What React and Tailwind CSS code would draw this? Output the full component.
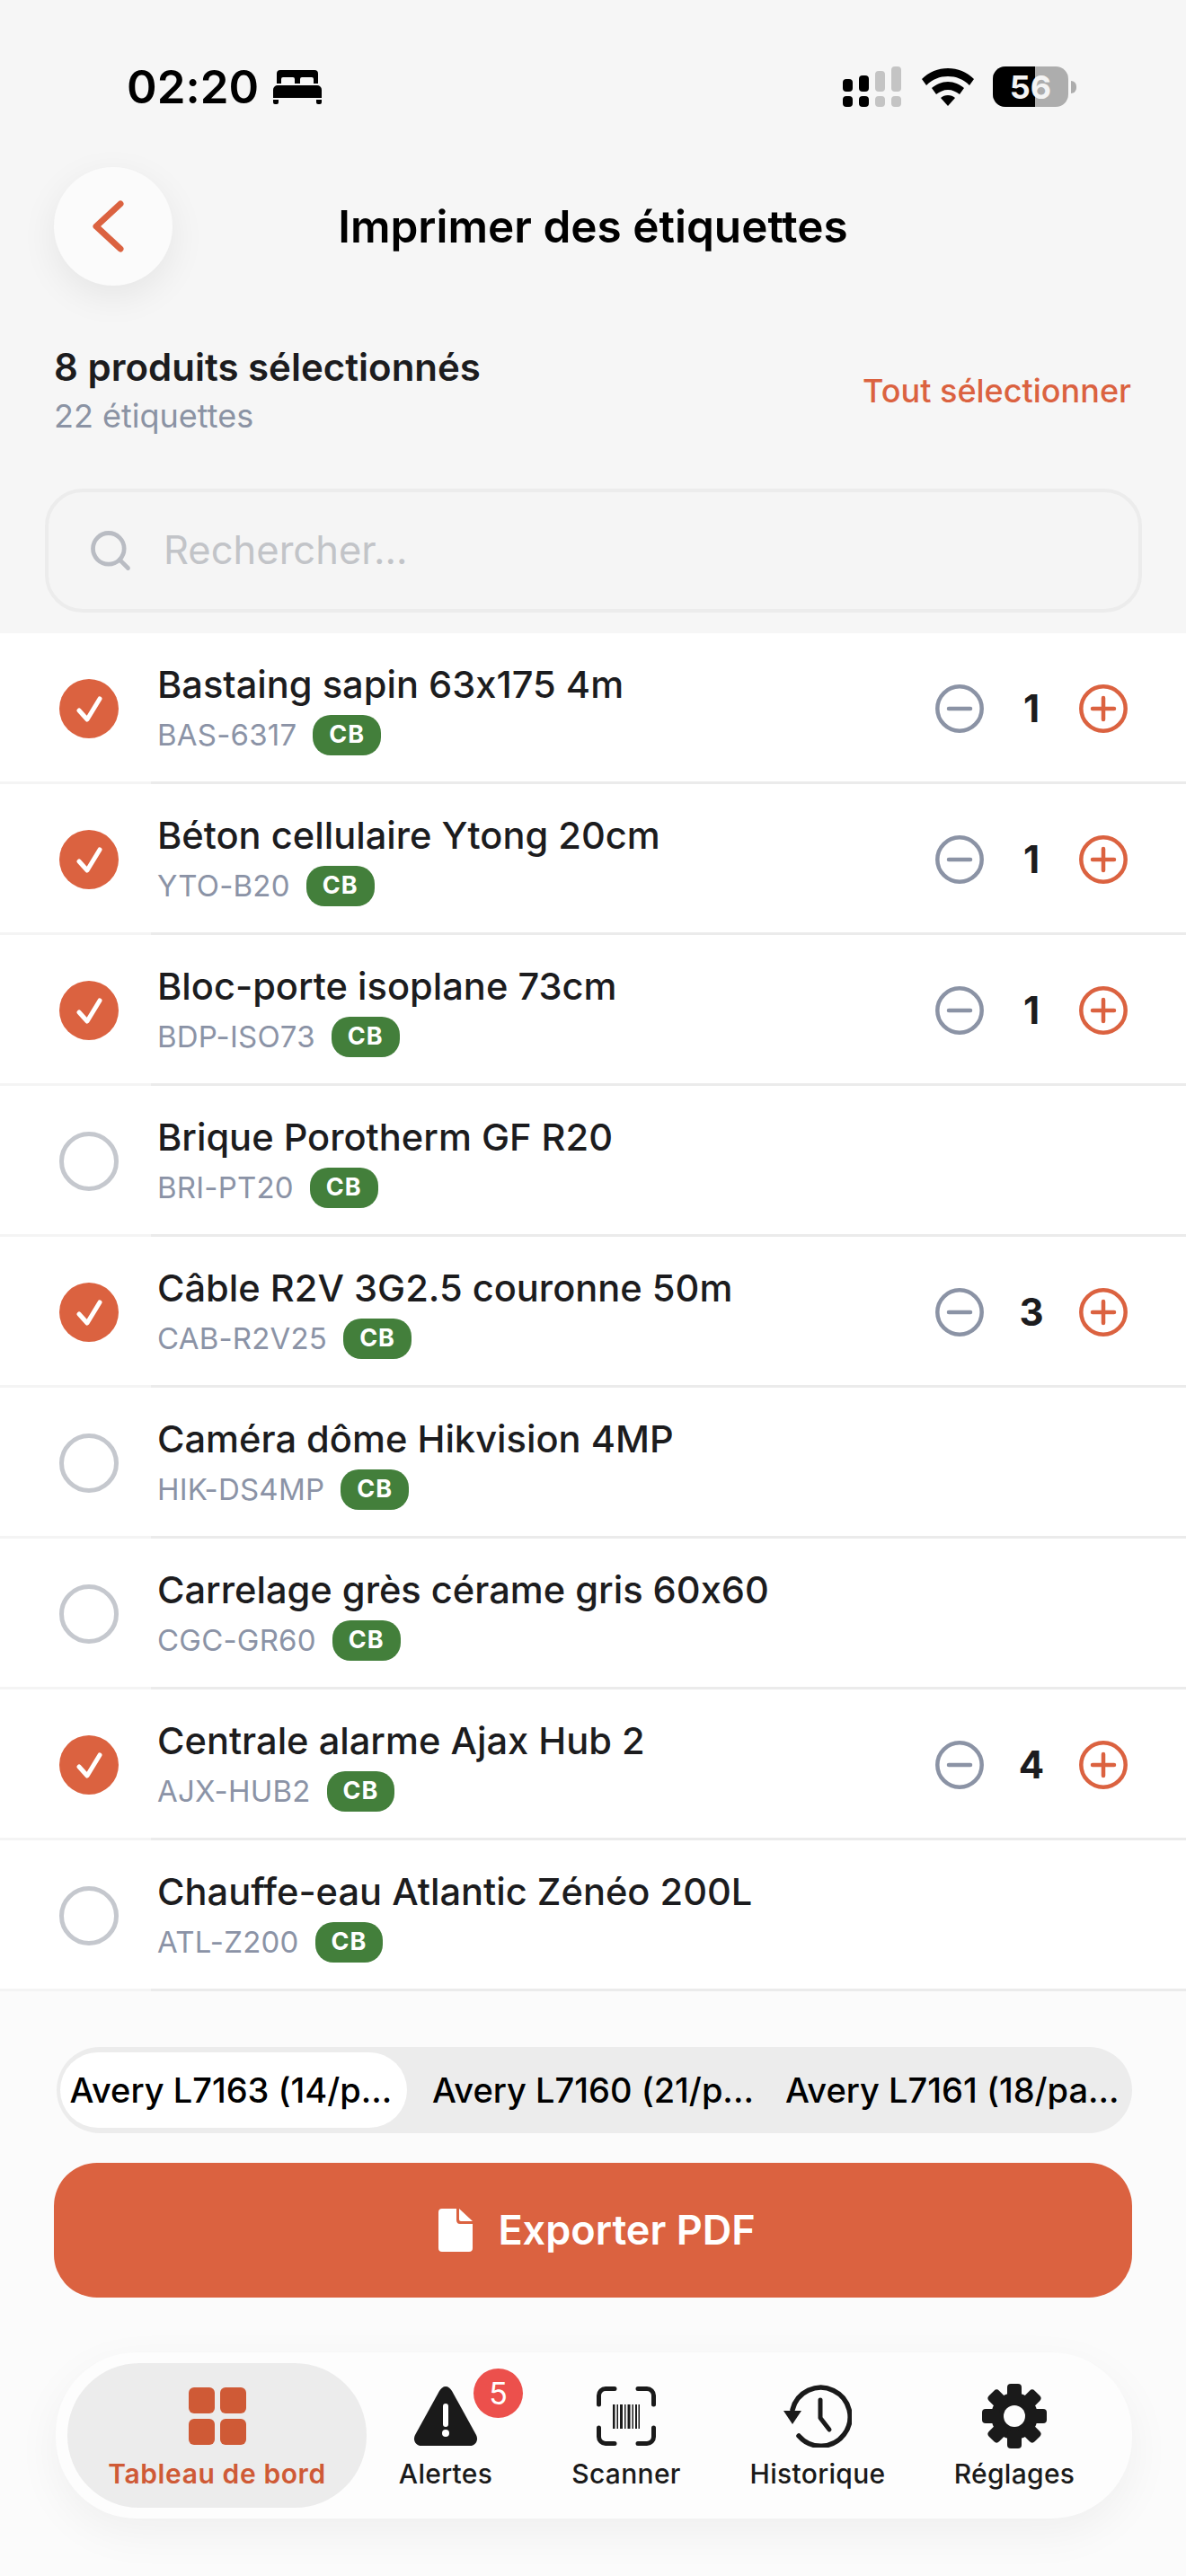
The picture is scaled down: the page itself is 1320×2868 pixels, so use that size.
import React from 'react';
import { Search } from 'lucide-react';

const products = [
  { name: 'Bastaing sapin 63x175 4m', sku: 'BAS-6317', qty: 1 },
  { name: 'Béton cellulaire Ytong 20cm', sku: 'YTO-B20', qty: 1 },
  { name: 'Bloc-porte isoplane 73cm', sku: 'BDP-ISO73', qty: 1 },
  { name: 'Brique Porotherm GF R20', sku: 'BRI-PT20' },
  { name: 'Câble R2V 3G2.5 couronne 50m', sku: 'CAB-R2V25', qty: 3 },
  { name: 'Caméra dôme Hikvision 4MP', sku: 'HIK-DS4MP' },
  { name: 'Carrelage grès cérame gris 60x60', sku: 'CGC-GR60' },
  { name: 'Centrale alarme Ajax Hub 2', sku: 'AJX-HUB2', qty: 4 },
  { name: 'Chauffe-eau Atlantic Zénéo 200L', sku: 'ATL-Z200' },
];

const Bed = () => (
  <svg width="54" height="38" viewBox="0 0 54 38" fill="#000">
    <path fillRule="evenodd" d="M8 0h38a4 4 0 0 1 4 4v11h-5v-5a2 2 0 0 0-2-2H32a2 2 0 0 0-2 2v5h-6v-5a2 2 0 0 0-2-2H11a2 2 0 0 0-2 2v5H4V4a4 4 0 0 1 4-4z" />
    <path d="M5 17h44a5 5 0 0 1 5 5v9H0v-9a5 5 0 0 1 5-5zM0 33h6v3a2 2 0 0 1-2 2H2a2 2 0 0 1-2-2zM48 33h6v3a2 2 0 0 1-2 2h-2a2 2 0 0 1-2-2z" />
  </svg>
);

const Signal = () => (
  <svg width="65" height="45" viewBox="0 0 65 45">
    <g fill="#000">
      <rect x="0" y="14" width="11" height="14" rx="4" />
      <rect x="18" y="10" width="11" height="18" rx="4" />
      <rect x="0" y="33" width="11" height="12" rx="4" />
      <rect x="18" y="33" width="11" height="12" rx="4" />
    </g>
    <g fill="#c4c4c4">
      <rect x="36" y="5" width="11" height="23" rx="4" />
      <rect x="54" y="0" width="11" height="28" rx="4" />
      <rect x="36" y="33" width="11" height="12" rx="4" />
      <rect x="54" y="33" width="11" height="12" rx="4" />
    </g>
  </svg>
);

const Wifi = () => (
  <svg width="58" height="42" viewBox="0 0 58 42" fill="#000">
    <path d="M29 0c11 0 21 4 29 12l-5 7C46 12 38 9 29 9S12 12 5 19l-5-7C8 4 18 0 29 0z" />
    <path d="M29 15c7 0 13 3 18 7l-5 7c-4-3-8-5-13-5s-9 2-13 5l-5-7c5-4 11-7 18-7z" />
    <path d="M29 30c3 0 6 1 8 3l-8 9-8-9c2-2 5-3 8-3z" />
  </svg>
);

const Battery = () => (
  <div className="flex items-center gap-[3px]">
    <div className="relative w-[84px] h-[45px] rounded-[14px] overflow-hidden bg-[#adadad] flex items-center justify-center">
      <div className="absolute left-0 top-0 bottom-0 w-[47px] bg-black" />
      <span className="relative text-[36px] font-bold text-[#f4f4f4] leading-none">56</span>
    </div>
    <div className="w-[6px] h-[14px] rounded-r-full bg-[#adadad]" />
  </div>
);

const Check = ({ on }) =>
  on ? (
    <div className="w-[66px] h-[66px] rounded-full bg-[#db6240] flex items-center justify-center shrink-0">
      <svg width="30" height="30" viewBox="0 0 30 30" fill="none" stroke="#fff" strokeWidth="5" strokeLinecap="round" strokeLinejoin="round">
        <path d="M4 17l9 10L27 4" />
      </svg>
    </div>
  ) : (
    <div className="w-[66px] h-[66px] rounded-full border-[5px] border-[#c5c8ce] shrink-0" />
  );

const Stepper = ({ qty }) => (
  <div className="flex items-center">
    <svg width="54" height="54" viewBox="0 0 54 54" fill="none" stroke="#8b93a5" strokeWidth="4.5" strokeLinecap="round">
      <circle cx="27" cy="27" r="24.7" />
      <path d="M15 27h24" />
    </svg>
    <div className="w-[106px] text-center text-[42px] font-bold text-[#1c1c1e] leading-none">{qty}</div>
    <svg width="54" height="54" viewBox="0 0 54 54" fill="none" stroke="#db6240" strokeWidth="4.5" strokeLinecap="round">
      <circle cx="27" cy="27" r="24.7" />
      <path d="M15 27h24M27 15v24" />
    </svg>
  </div>
);

const Row = ({ name, sku, qty }) => (
  <div className="flex items-center h-[168px] pl-[66px] pr-[65px] bg-white relative">
    <Check on={qty != null} />
    <div className="ml-[43px] flex-1 min-w-0">
      <div className="text-[41.6px] font-medium text-[#1c1c1e] leading-[50px] whitespace-nowrap">{name}</div>
      <div className="flex items-center mt-[8px]">
        <span className="text-[33px] tracking-[0.2px] text-[#8b93a6] leading-[46px]">{sku}</span>
        <span className="ml-[18px] h-[45px] px-[18px] rounded-[20px] bg-[#437f3b] text-white text-[27px] font-bold tracking-[1px] flex items-center">CB</span>
      </div>
    </div>
    {qty != null && <Stepper qty={qty} />}
    <div className="absolute left-0 right-0 bottom-0 h-[3px] bg-[#f4f4f4]" />
    <div className="absolute left-[168px] right-0 bottom-0 h-[3px] bg-[#ebebeb]" />
  </div>
);

const GridIcon = () => (
  <svg width="64" height="64" viewBox="0 0 64 64" fill="#cf5a36">
    <rect x="0" y="0" width="29" height="29" rx="6" />
    <rect x="35" y="0" width="29" height="29" rx="6" />
    <rect x="0" y="35" width="29" height="29" rx="6" />
    <rect x="35" y="35" width="29" height="29" rx="6" />
  </svg>
);

const AlertIcon = () => (
  <svg width="72" height="66" viewBox="0 0 72 66">
    <path d="M36 0c3 0 5 2 7 5l27 49c3 6-1 12-7 12H9c-6 0-10-6-7-12L29 5c2-3 4-5 7-5z" fill="#1a1a1a" />
    <path d="M36 22v20" stroke="#fff" strokeWidth="6" strokeLinecap="round" />
    <circle cx="36" cy="52" r="4" fill="#fff" />
  </svg>
);

const ScanIcon = () => (
  <svg width="66" height="66" viewBox="0 0 66 66" fill="none">
    <path d="M2.500 20V10a7.500 7.500 0 0 1 7.500-7.500h10M46 2.500h10a7.500 7.500 0 0 1 7.500 7.500v10M63.500 46v10a7.500 7.500 0 0 1-7.500 7.500H46M20 63.500H10a7.500 7.500 0 0 1-7.500-7.500V46" stroke="#1a1a1a" strokeWidth="5" strokeLinecap="round" />
    <path d="M18 20h2.500v27H18zM22.500 20h1.500v27h-1.500zM26 20h3v27h-3zM31 20h1.500v27H31zM34.500 20h3v27h-3zM39.500 20h1.500v27h-1.500zM43 20h2v27h-2zM46.500 20h1.500v27h-1.500z" fill="#1a1a1a" />
  </svg>
);

const HistoryIcon = () => (
  <svg width="76" height="70" viewBox="0 0 76 70" fill="none">
    <path d="M10 28A32.500 32.500 0 1 1 17 57" stroke="#1a1a1a" strokeWidth="5.500" strokeLinecap="round" />
    <path d="M0 29h20L10 44z" fill="#1a1a1a" />
    <path d="M41 17v20l10 13" stroke="#1a1a1a" strokeWidth="5" strokeLinecap="round" strokeLinejoin="round" />
  </svg>
);

const GearIcon = () => (
  <svg width="72" height="72" viewBox="0 0 72 72">
    <g fill="#1a1a1a">
      <circle cx="36" cy="36" r="26" />
      {[0, 45, 90, 135, 180, 225, 270, 315].map(a => (
        <rect key={a} x="28" y="0" width="16" height="20" rx="4" transform={`rotate(${a} 36 36)`} />
      ))}
    </g>
    <circle cx="36" cy="36" r="12" fill="#fdfdfd" />
  </svg>
);

const Tab = ({ icon, label, className }) => (
  <div className={`flex flex-col items-center justify-end ${className}`}>
    <div className="mt-[3px] h-[72px] flex items-center justify-center">{icon}</div>
    <div className="mt-[10px] text-[30px] tracking-[0.3px] font-medium text-[#1a1a1a] leading-[36px] whitespace-nowrap">{label}</div>
  </div>
);

export default function App() {
  return (
    <div
      className="w-[1320px] h-[2868px] overflow-hidden bg-[#f6f6f6] flex flex-col [font-feature-settings:'calt'_0]"
      style={{ fontFamily: 'Inter, sans-serif' }}
    >
      {/* Status bar */}
      <div className="h-[186px] shrink-0 flex items-start justify-between pt-[74px] pl-[141px] pr-[122px]">
        <div className="flex items-center gap-[16px] h-[45px]">
          <span className="text-[51px] font-semibold text-black leading-none">02:20</span>
          <Bed />
        </div>
        <div className="flex items-center gap-[21px] h-[45px]">
          <Signal />
          <div className="ml-[2px]">
            <Wifi />
          </div>
          <Battery />
        </div>
      </div>

      {/* Header */}
      <div className="relative h-[132px] shrink-0 flex items-center justify-center">
        <button className="absolute left-[60px] top-0 w-[132px] h-[132px] rounded-full bg-[#fbfbfb] shadow-[0_12px_40px_rgba(0,0,0,0.07)] flex items-center justify-center">
          <svg width="40" height="62" viewBox="0 0 40 62" fill="none" stroke="#db6240" strokeWidth="7" strokeLinecap="round" strokeLinejoin="round" className="-ml-[8px]">
            <path d="M32 6L5 31l27 25" />
          </svg>
        </button>
        <h1 className="pt-[2px] text-[49.5px] font-semibold text-black leading-none">Imprimer des étiquettes</h1>
      </div>

      {/* Selection summary */}
      <div className="flex items-center justify-between pl-[60px] pr-[61px] mt-[66px] shrink-0">
        <div>
          <div className="text-[42px] font-semibold text-[#1c1c1e] leading-[50px]">8 produits sélectionnés</div>
          <div className="text-[36px] text-[#8b93a4] leading-[44px] mt-[7px]">22 étiquettes</div>
        </div>
        <div className="text-[36px] font-medium text-[#db6240]">Tout sélectionner</div>
      </div>

      {/* Search */}
      <div className="ml-[50px] mr-[49px] mt-[59px] h-[138px] shrink-0 rounded-[42px] border-[4px] border-[#ececec] bg-[#f5f5f5] flex items-center pl-[43px]">
        <Search size={52} strokeWidth={2.2} color="#b9bcc3" />
        <span className="ml-[33px] text-[43.5px] text-[#c2c4c8]">Rechercher...</span>
      </div>

      {/* Product list */}
      <div className="mt-[23px] shrink-0">
        {products.map(p => (
          <Row key={p.sku} {...p} />
        ))}
      </div>

      {/* Bottom panel */}
      <div className="flex-1 bg-[#fbfbfb] px-[60px] pt-[62px]">
        <div className="h-[96px] ml-[3px] rounded-full bg-[#ececec] flex items-center pl-[4px] text-[38px] font-medium text-black whitespace-nowrap">
          <div className="w-[386px] h-[84px] rounded-full bg-white flex items-center justify-center pr-[6px]">Avery L7163 (14/p...</div>
          <div className="ml-[28px] w-[362px]">Avery L7160 (21/p...</div>
          <div className="ml-[31px]">Avery L7161 (18/pa...</div>
        </div>
        <button className="mt-[33px] w-full h-[150px] rounded-[48px] bg-[#db6240] flex items-center justify-center pl-[9px] text-white text-[45px] font-semibold">
          <svg width="38" height="48" viewBox="0 0 38 48" fill="#fff" className="mr-[28px]">
            <path d="M4 0h16v13a4 4 0 0 0 4 4h14v27a4 4 0 0 1-4 4H4a4 4 0 0 1-4-4V4a4 4 0 0 1 4-4z" />
            <path d="M23 0l15 14H25a2 2 0 0 1-2-2z" />
          </svg>
          Exporter PDF
        </button>

        {/* Tab bar */}
        <div className="mt-[61px] ml-[2px] h-[185px] rounded-[90px] bg-[#fdfdfd] shadow-[0_16px_50px_rgba(0,0,0,0.05)] flex items-center pl-[13px]">
          <div className="w-[333px] h-[161px] rounded-[80px] bg-[#ececec] flex flex-col items-center pt-[27px]">
            <GridIcon />
            <div className="mt-[14px] text-[30px] tracking-[0.6px] font-semibold text-[#cf5a36] leading-[36px]">Tableau de bord</div>
          </div>
          <div className="relative w-[156px] ml-[10px]">
            <Tab icon={<AlertIcon />} label="Alertes" />
            <div className="absolute left-[109px] -top-[14px] w-[55px] h-[55px] rounded-full bg-[#ec504c] text-white text-[34px] flex items-center justify-center">5</div>
          </div>
          <Tab icon={<ScanIcon />} label="Scanner" className="w-[156px] ml-[45px]" />
          <Tab icon={<HistoryIcon />} label="Historique" className="w-[156px] ml-[57px]" />
          <Tab icon={<GearIcon />} label="Réglages" className="w-[156px] ml-[63px]" />
        </div>
      </div>
    </div>
  );
}
